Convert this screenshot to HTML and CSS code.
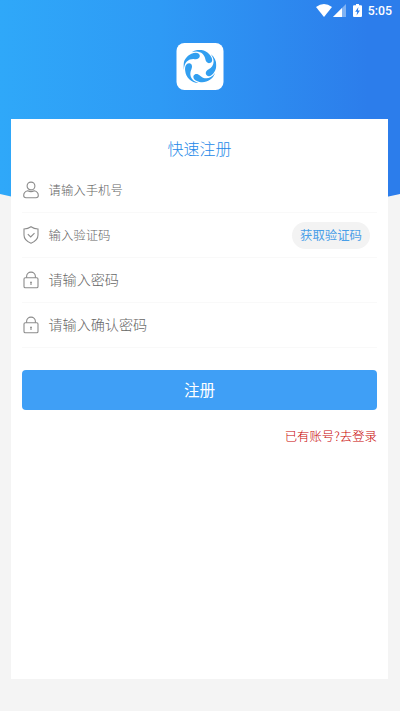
FILE: index.html
```html
<!DOCTYPE html>
<html lang="zh-CN">
<head>
<meta charset="utf-8">
<title>快速注册</title>
<link rel="stylesheet" href="styles.css">
</head>
<body>
<div class="page">
  <header class="status">
    <svg class="wifi" viewBox="0 0 16 13"><path d="M0 3Q8-3 16 3L8 13Z"/></svg>
    <svg class="signal" viewBox="0 0 13 13"><path class="dim" d="M13 0V13H0Z"/><path d="M9 4V13H0Z"/></svg>
    <svg class="battery" viewBox="0 0 9 13"><path fill-rule="evenodd" d="M3 0H6V1.3H8Q9 1.3 9 2.3V12Q9 13 8 13H1Q0 13 0 12V2.3Q0 1.3 1 1.3H3ZM5.4 3L2.2 7.8H4.2L3.6 11.5L6.9 6.5H4.9Z"/></svg>
    <span class="time">5:05</span>
  </header>
  <div class="brand">
    <svg class="logo" viewBox="-50 -50 100 100">
      <defs><path id="blade" d="M-49-10C-46-32-28-46-8-46C7-46 15-39 13-31C11-23 2-22-6-27C-19-35-38-34-49-10Z"/></defs>
      <use href="#blade" transform="rotate(-24)"/>
      <use href="#blade" transform="rotate(48)"/>
      <use href="#blade" transform="rotate(120)"/>
      <use href="#blade" transform="rotate(192)"/>
      <use href="#blade" transform="rotate(264)"/>
    </svg>
  </div>
  <main class="card">
    <h1 class="title">快速注册</h1>
    <div class="row">
      <svg class="icon" viewBox="0 0 18 18"><circle cx="9" cy="5" r="3.9"/><path d="M5.7 9.8C3 10.5 1.7 12.4 1.7 14.5Q1.7 16.7 4 16.7H14Q16.3 16.7 16.3 14.5C16.3 12.4 15 10.5 12.3 9.8Q9 11.5 5.7 9.8Z"/></svg>
      <span class="hint">请输入手机号</span>
    </div>
    <div class="row">
      <svg class="icon" viewBox="0 0 18 18"><path d="M9 .8Q12 3 16 3V9Q16 14.5 9 17.2Q2 14.5 2 9V3Q6 3 9 .8Z"/><path d="M5.8 8.2L8.7 11L12.5 7.2"/></svg>
      <span class="hint">输入验证码</span>
      <span class="code">获取验证码</span>
    </div>
    <div class="row">
      <svg class="icon" viewBox="0 0 18 18"><rect x="2" y="6.8" width="14" height="10" rx="1.3"/><path d="M4.6 6.8V5.5a4.4 4.4 0 0 1 8.8 0V6.8M9 11V14M8 11.2H10"/></svg>
      <span class="hint large">请输入密码</span>
    </div>
    <div class="row">
      <svg class="icon" viewBox="0 0 18 18"><rect x="2" y="6.8" width="14" height="10" rx="1.3"/><path d="M4.6 6.8V5.5a4.4 4.4 0 0 1 8.8 0V6.8M9 11V14M8 11.2H10"/></svg>
      <span class="hint large">请输入确认密码</span>
    </div>
    <div class="submit">注册</div>
    <div class="login">已有账号?去登录</div>
  </main>
</div>
</body>
</html>
```
FILE: styles.css
```css
* { box-sizing: border-box; }
body {
  margin: 0;
  background: #f4f4f4;
  font-family: "Noto Sans CJK SC", sans-serif;
  font-weight: 300;
}
.page {
  position: relative;
  height: 711px;
  overflow: hidden;
  isolation: isolate;
}
.page::before {
  content: "";
  position: absolute;
  z-index: -1;
  inset: 0 0 auto;
  height: 218px;
  background: linear-gradient(90deg, #2fa8f9, #2e9af5 40%, #2c7deb 92%);
  clip-path: path("M0 0H400V194Q200 242 0 194Z");
}
.status {
  display: flex;
  align-items: center;
  height: 21px;
  padding-right: 8px;
  justify-content: flex-end;
  color: #fff;
}
.status svg { fill: #fff; height: 13px; }
.wifi { width: 16px; }
.signal { width: 13px; margin-left: 1px; }
.status .dim { opacity: .4; }
.battery { width: 9px; margin: 0 6px 0 7px; }
.time {
  padding-top: 1px;
  font: 500 12.3px/21px Roboto, sans-serif;
}
.brand {
  display: flex;
  align-items: center;
  justify-content: center;
  width: 47px;
  height: 47px;
  margin: 22.4px auto 29px;
  border-radius: 8px;
  background: #fff;
  transform: translateX(-.5px);
}
.logo { width: 33px; height: 33px; fill: #329ff0; }
.card {
  height: 559.2px;
  margin: 0 12px 0 11px;
  padding: 0 11px;
  background: #fff;
}
.title {
  margin: 0;
  height: 48.6px;
  padding-top: 16.6px;
  font-size: 16px;
  font-weight: 300;
  line-height: 24px;
  text-align: center;
  color: #2388e8;
}
.row {
  display: flex;
  align-items: center;
  height: 45px;
  border-bottom: 1px solid #f9f9f9;
}
.icon {
  width: 18px;
  height: 18px;
  margin-left: -.5px;
  fill: none;
  stroke: #8c8c8c;
  stroke-width: 1.1;
}
.hint {
  margin-left: 9px;
  font-size: 12.4px;
  line-height: 20px;
  color: #666;
}
.large {
  padding-bottom: 2px;
  font-size: 14.1px;
}
.code {
  width: 78px;
  height: 27px;
  margin: 1px 7px 0 auto;
  border-radius: 14px;
  background: #f3f3f3;
  font-size: 12.4px;
  font-weight: 400;
  line-height: 27px;
  text-align: center;
  color: #4a9fe8;
}
.submit {
  height: 40px;
  margin-top: 21.6px;
  border-radius: 4px;
  background: #3f9ff6;
  font-size: 15.6px;
  font-weight: 400;
  line-height: 39px;
  text-align: center;
  color: #fff;
}
.login {
  margin-top: 16.4px;
  font-size: 12.4px;
  line-height: 20px;
  text-align: right;
  color: #c80000;
}
```
